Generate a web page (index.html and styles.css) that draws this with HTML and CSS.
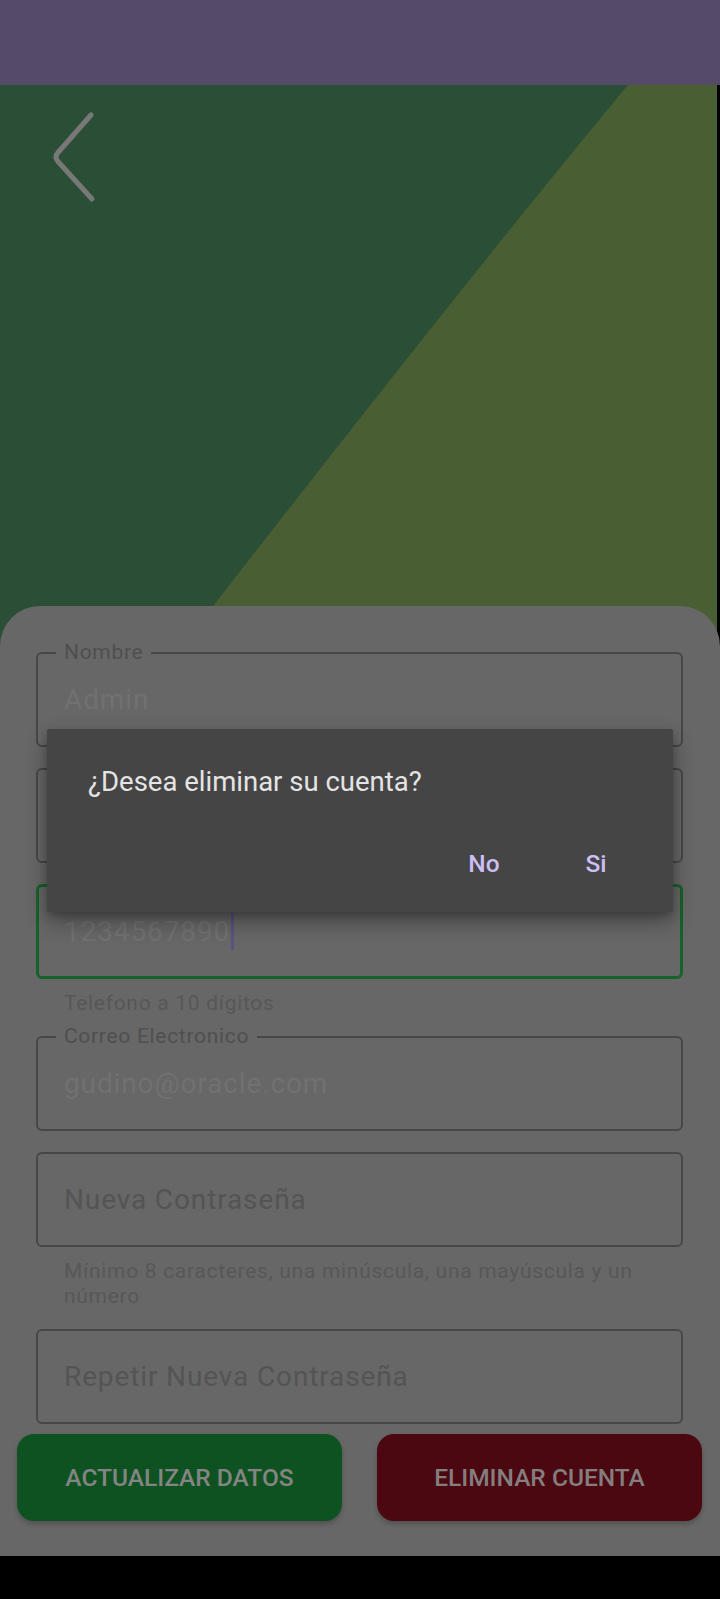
FILE: index.html
```html
<!DOCTYPE html>
<html lang="es">
<head>
<meta charset="utf-8">
<title>Editar perfil</title>
<link rel="stylesheet" href="styles.css">
</head>
<body>
<div class="screen">
  <div class="statusbar"></div>
  <header class="hero">
    <svg class="hero-bg" viewBox="0 0 717 561" width="717" height="561" aria-hidden="true">
      <rect x="0" y="0" width="717" height="561" fill="#2b4f36"/>
      <path d="M628 0 Q 470 190 182 561 L717 561 L717 0 Z" fill="#4a5e33"/>
    </svg>
    <button class="back" type="button" aria-label="Regresar">
      <svg viewBox="0 0 55 95" width="55" height="95">
        <path d="M46 5 L13 42.5 Q9 47 13 51.5 L47 89" fill="none" stroke="#787878" stroke-width="5" stroke-linecap="round" stroke-linejoin="round"/>
      </svg>
    </button>
  </header>
  <main class="card">
    <form class="form">
      <div class="field">
        <span class="label">Nombre</span>
        <span class="value">Admin</span>
      </div>
      <div class="field"></div>
      <div class="field focused">
        <span class="value">1234567890</span><span class="cursor"></span>
      </div>
      <p class="helper helper-phone">Telefono a 10 dígitos</p>
      <div class="field">
        <span class="label">Correo Electronico</span>
        <span class="value">gudino@oracle.com</span>
      </div>
      <div class="field">
        <span class="placeholder">Nueva Contraseña</span>
      </div>
      <p class="helper helper-pass">Mínimo 8 caracteres, una minúscula, una mayúscula y un número</p>
      <div class="field">
        <span class="placeholder">Repetir Nueva Contraseña</span>
      </div>
    </form>
    <div class="actions">
      <button class="btn btn-update" type="button">Actualizar datos</button>
      <button class="btn btn-delete" type="button">Eliminar cuenta</button>
    </div>
  </main>
  <div class="navbar"></div>

  <div class="dialog" role="dialog">
    <p class="dialog-title">¿Desea eliminar su cuenta?</p>
    <div class="dialog-actions">
      <button class="dialog-btn" type="button">No</button>
      <button class="dialog-btn" type="button">Si</button>
    </div>
  </div>
</div>
</body>
</html>
```

FILE: styles.css
```css
* {
  box-sizing: border-box;
}

html, body {
  margin: 0;
  padding: 0;
  background: #000;
}

body {
  width: 720px;
  height: 1599px;
  overflow: hidden;
  font-family: Roboto, "Noto Sans", "Liberation Sans", sans-serif;
}

.screen {
  position: relative;
  width: 720px;
  height: 1599px;
  display: flex;
  flex-direction: column;
}

.statusbar {
  height: 85px;
  flex: 0 0 85px;
  background: #554b69;
}

.hero {
  position: relative;
  height: 561px;
  flex: 0 0 561px;
  background: #000;
}

.hero-bg {
  display: block;
}

.back {
  position: absolute;
  left: 45px;
  top: 25px;
  width: 55px;
  height: 95px;
  padding: 0;
  border: 0;
  background: transparent;
}

.back svg {
  display: block;
}

.card {
  flex: 1 1 auto;
  margin-top: -40px;
  position: relative;
  background: #676767;
  border-radius: 40px 40px 0 0;
  padding-top: 46px;
  display: flex;
  flex-direction: column;
}

.form {
  margin: 0;
  padding: 0 37px 0 36px;
  display: flex;
  flex-direction: column;
}

.field {
  position: relative;
  height: 95px;
  flex: 0 0 95px;
  border: 2px solid #474747;
  border-radius: 6px;
  display: flex;
  align-items: center;
  padding-left: 26px;
  margin-bottom: 21px;
}

.field.focused {
  border: 3px solid #17622a;
  padding-left: 25px;
  margin-bottom: 0;
}

.label {
  position: absolute;
  left: 18px;
  top: -14px;
  padding: 0 8px;
  background: #676767;
  font-size: 21px;
  line-height: 24px;
  letter-spacing: 0.7px;
  color: #4f4f4f;
}

.value,
.placeholder {
  font-size: 28px;
  line-height: 33px;
  letter-spacing: 0.875px;
  white-space: nowrap;
}

.value {
  color: #717171;
}

.placeholder {
  color: #545454;
}

.cursor {
  display: inline-block;
  width: 3px;
  height: 37px;
  margin-left: 1px;
  background: #5b5283;
}

.helper {
  margin: 0;
  padding: 0 28px;
  font-size: 21px;
  line-height: 25px;
  letter-spacing: 0.7px;
  color: #575757;
}

.helper-phone {
  margin-top: 12px;
  margin-bottom: 20px;
}

.helper-pass {
  margin-top: -9px;
  margin-bottom: 20px;
}

.actions {
  display: flex;
  gap: 35px;
  padding: 0 18px 0 17px;
  margin-top: -11px;
}

.btn {
  flex: 1 1 0;
  height: 87px;
  border: 0;
  border-radius: 17px;
  font-family: Roboto, "Noto Sans", "Liberation Sans", sans-serif;
  font-size: 24.5px;
  font-weight: 500;
  text-transform: uppercase;
  color: #848484;
  box-shadow: 0 3px 5px rgba(0, 0, 0, 0.22);
}

.btn-update {
  background: #0f5221;
}

.btn-delete {
  background: #4b0811;
  color: #857e7f;
}

.navbar {
  height: 43px;
  flex: 0 0 43px;
  background: #000;
}

.dialog {
  position: absolute;
  left: 47px;
  top: 729px;
  width: 626px;
  height: 183px;
  background: #454545;
  border-radius: 2px;
  box-shadow: 0 10px 22px rgba(0, 0, 0, 0.32), 0 4px 8px rgba(0, 0, 0, 0.2);
  display: flex;
  flex-direction: column;
}

.dialog-title {
  margin: 0;
  padding: 36px 0 0 41px;
  font-size: 27.5px;
  line-height: 33px;
  letter-spacing: 0;
  color: #e4e4e4;
}

.dialog-actions {
  display: flex;
  justify-content: flex-end;
  padding-right: 21px;
  margin-top: 34px;
}

.dialog-btn {
  width: 112px;
  height: 63px;
  padding: 0;
  border: 0;
  background: transparent;
  font-family: Roboto, "Noto Sans", "Liberation Sans", sans-serif;
  font-size: 24.5px;
  font-weight: 500;
  color: #ccbef6;
}
```
